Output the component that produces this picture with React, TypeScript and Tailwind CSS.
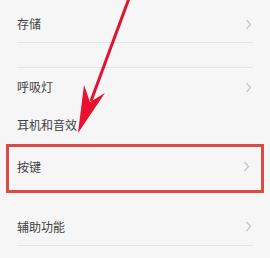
import React from 'react';

const font = { fontFamily: '"Noto Sans CJK SC", "Noto Sans", sans-serif' };

function Chevron() {
  return (
    <svg width="7" height="11" viewBox="0 0 7 11" className="shrink-0">
      <path d="M1.5 1 L5.5 5.5 L1.5 10" fill="none" stroke="#c4c4c4" strokeWidth="1.2" />
    </svg>
  );
}

function Row({ label, arrow = true, className = '' }: { label: string; arrow?: boolean; className?: string }) {
  return (
    <div className={`flex items-center justify-between pl-[17px] pr-[18px] ${className}`}>
      <span className="text-[12px] text-[#404040]">{label}</span>
      {arrow && <Chevron />}
    </div>
  );
}

function Divider() {
  return <div className="mx-[17px] h-px bg-[#e4e4e4]" />;
}

export default function App() {
  return (
    <div className="relative w-[270px] h-[258px] overflow-hidden bg-[#f6f6f6]" style={font}>
      <div className="flex flex-col">
        <Row label="存储" className="h-[42px] pt-[6px]" />
        <Divider />
        <div className="h-[24px]" />
        <Divider />
        <Row label="呼吸灯" className="h-[38px]" />
        <Row label="耳机和音效" arrow={false} className="h-[38px]" />
        <div className="mx-[6px] h-[49px] border-[3px] border-[#dc4a48] flex items-center justify-between pl-[8px] pr-[11px] pb-[4px]">
          <span className="text-[12px] text-[#404040]">按键</span>
          <Chevron />
        </div>
        <div className="h-[15px]" />
        <Row label="辅助功能" className="h-[37px]" />
        <Divider />
      </div>

      {/* annotation arrow */}
      <svg className="absolute inset-0 pointer-events-none" width="270" height="258" viewBox="0 0 270 258">
        <line x1="129.5" y1="-3" x2="91" y2="101" stroke="#e0142f" strokeWidth="3" />
        <polygon points="78,133 105,93 90,102 84,85" fill="#e8122e" />
      </svg>
    </div>
  );
}
